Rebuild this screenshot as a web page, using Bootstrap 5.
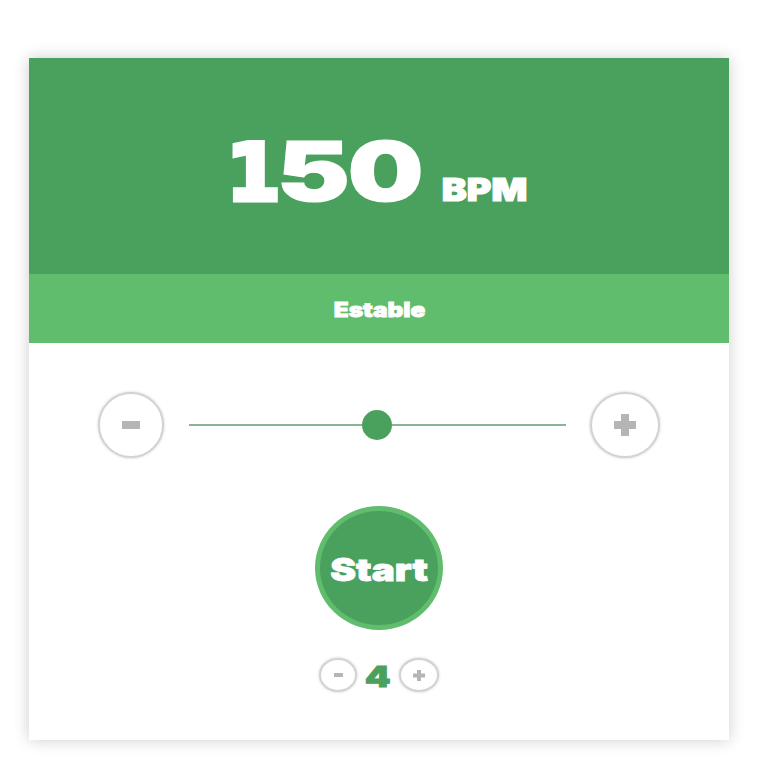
<!DOCTYPE html>
<html lang="es">
<head>
<meta charset="utf-8">
<meta name="viewport" content="width=device-width, initial-scale=1">
<title>150 BPM</title>
<link rel="stylesheet" href="https://cdn.jsdelivr.net/npm/bootstrap@5.3.0/dist/css/bootstrap.min.css">
<style>
body{font-family:Inter,"Liberation Sans",sans-serif;font-weight:900;background:#fff;padding-top:58px;min-height:767px}
.metronome{width:700px;height:682px;box-shadow:0 0 15px rgba(0,0,0,.2)}
.tempo{height:216px;background:#4aa15e}
.tempo-line{height:145px}
.mood{height:69px;background:#5fbd6d;font-size:20px;padding-top:3px}
.wide{display:inline-block;white-space:nowrap;line-height:1;-webkit-text-stroke:.8px currentColor;transform:scaleX(1.22)}
.bpm-digits{width:190px;height:63px}
.bpm-digits .wide{line-height:63px;-webkit-text-stroke-width:1.2px}
.bpm-digits .d1{font-family:"DejaVu Sans",sans-serif;font-size:79px;line-height:66px;transform:translateX(-1px) scaleX(.99);-webkit-text-stroke-width:5px}
.d5,.d0{font-size:82px}
.bpm-digits .d5{transform:scaleX(1.34)}
.bpm-digits .d0{transform:translateX(.5px) scaleX(1.3)}
.cell-1{width:47px}
.cell-5{width:69px}
.cell-0{width:71px}
.unit{width:85px;height:26px;font-size:32px;margin-left:21px;margin-right:1px}
.unit .wide{transform:scaleX(1.17);-webkit-text-stroke-width:1.2px}
.control{border:2px solid #d3d3d3;border-radius:50%;background:#fff;color:#b5b5b5;box-shadow:0 0 3px rgba(0,0,0,.2);padding:0;flex:none}
.minus-lg{width:66px;height:66px}
.plus-lg{width:70px;height:66px}
.minus-sm{width:38px;height:34px}
.plus-sm{width:40px;height:34px}
.slider-row{padding:49px 68px 0 69px}
.track{width:377px;height:2px;background:#86b692;margin:0 24px 0 25px;flex:none}
.thumb{width:30px;height:30px;background:#4aa15e;flex:none;margin-right:1px}
.start{width:128px;height:124px;margin-top:48px;border:5px solid #5fbd6d;border-radius:50%;background:#4aa15e;color:#fff;font-size:31px;font-weight:900;padding:2px 0 0}
.start .wide{transform:scaleX(1.25)}
.beats{margin-top:28px;height:34px}
.count{width:42px;color:#4aa15e;font-size:28px;padding-top:3px}
.count .wide{transform:scaleX(1.32)}
</style>
</head>
<body>
<main class="metronome bg-white mx-auto d-flex flex-column align-items-center">
  <header class="tempo w-100 d-flex justify-content-center text-white">
    <div class="tempo-line d-flex align-items-end">
      <div class="bpm-digits d-flex justify-content-between"><span class="cell-1 d-flex justify-content-center"><span class="wide d1">1</span></span><span class="cell-5 d-flex justify-content-center"><span class="wide d5">5</span></span><span class="cell-0 d-flex justify-content-center"><span class="wide d0">0</span></span></div>
      <div class="unit d-flex align-items-center justify-content-center"><span class="wide">BPM</span></div>
    </div>
  </header>
  <div class="mood w-100 d-flex align-items-center justify-content-center text-white"><span class="wide">Estable</span></div>
  <div class="slider-row d-flex align-items-center w-100">
    <button class="control minus-lg d-flex align-items-center justify-content-center" aria-label="-"><svg width="18" height="8"><path d="M0 0h18v8H0z" fill="currentColor"/></svg></button>
    <div class="track d-flex align-items-center justify-content-center"><span class="thumb rounded-circle"></span></div>
    <button class="control plus-lg d-flex align-items-center justify-content-center" aria-label="+"><svg width="22" height="22"><path d="M7 0h8v7h7v8h-7v7H7v-7H0V7h7z" fill="currentColor"/></svg></button>
  </div>
  <button class="start d-flex align-items-center justify-content-center"><span class="wide">Start</span></button>
  <div class="beats d-flex align-items-center">
    <button class="control minus-sm d-flex align-items-center justify-content-center" aria-label="-"><svg width="9" height="4"><path d="M0 0h9v4H0z" fill="currentColor"/></svg></button>
    <div class="count d-flex justify-content-center"><span class="wide">4</span></div>
    <button class="control plus-sm d-flex align-items-center justify-content-center" aria-label="+"><svg width="12" height="11"><path d="M4 0h4v3.500h4v4H8V11H4V7.500H0v-4h4z" fill="currentColor"/></svg></button>
  </div>
</main>
<script src="https://cdn.jsdelivr.net/npm/bootstrap@5.3.0/dist/js/bootstrap.bundle.min.js"></script>
</body>
</html>
